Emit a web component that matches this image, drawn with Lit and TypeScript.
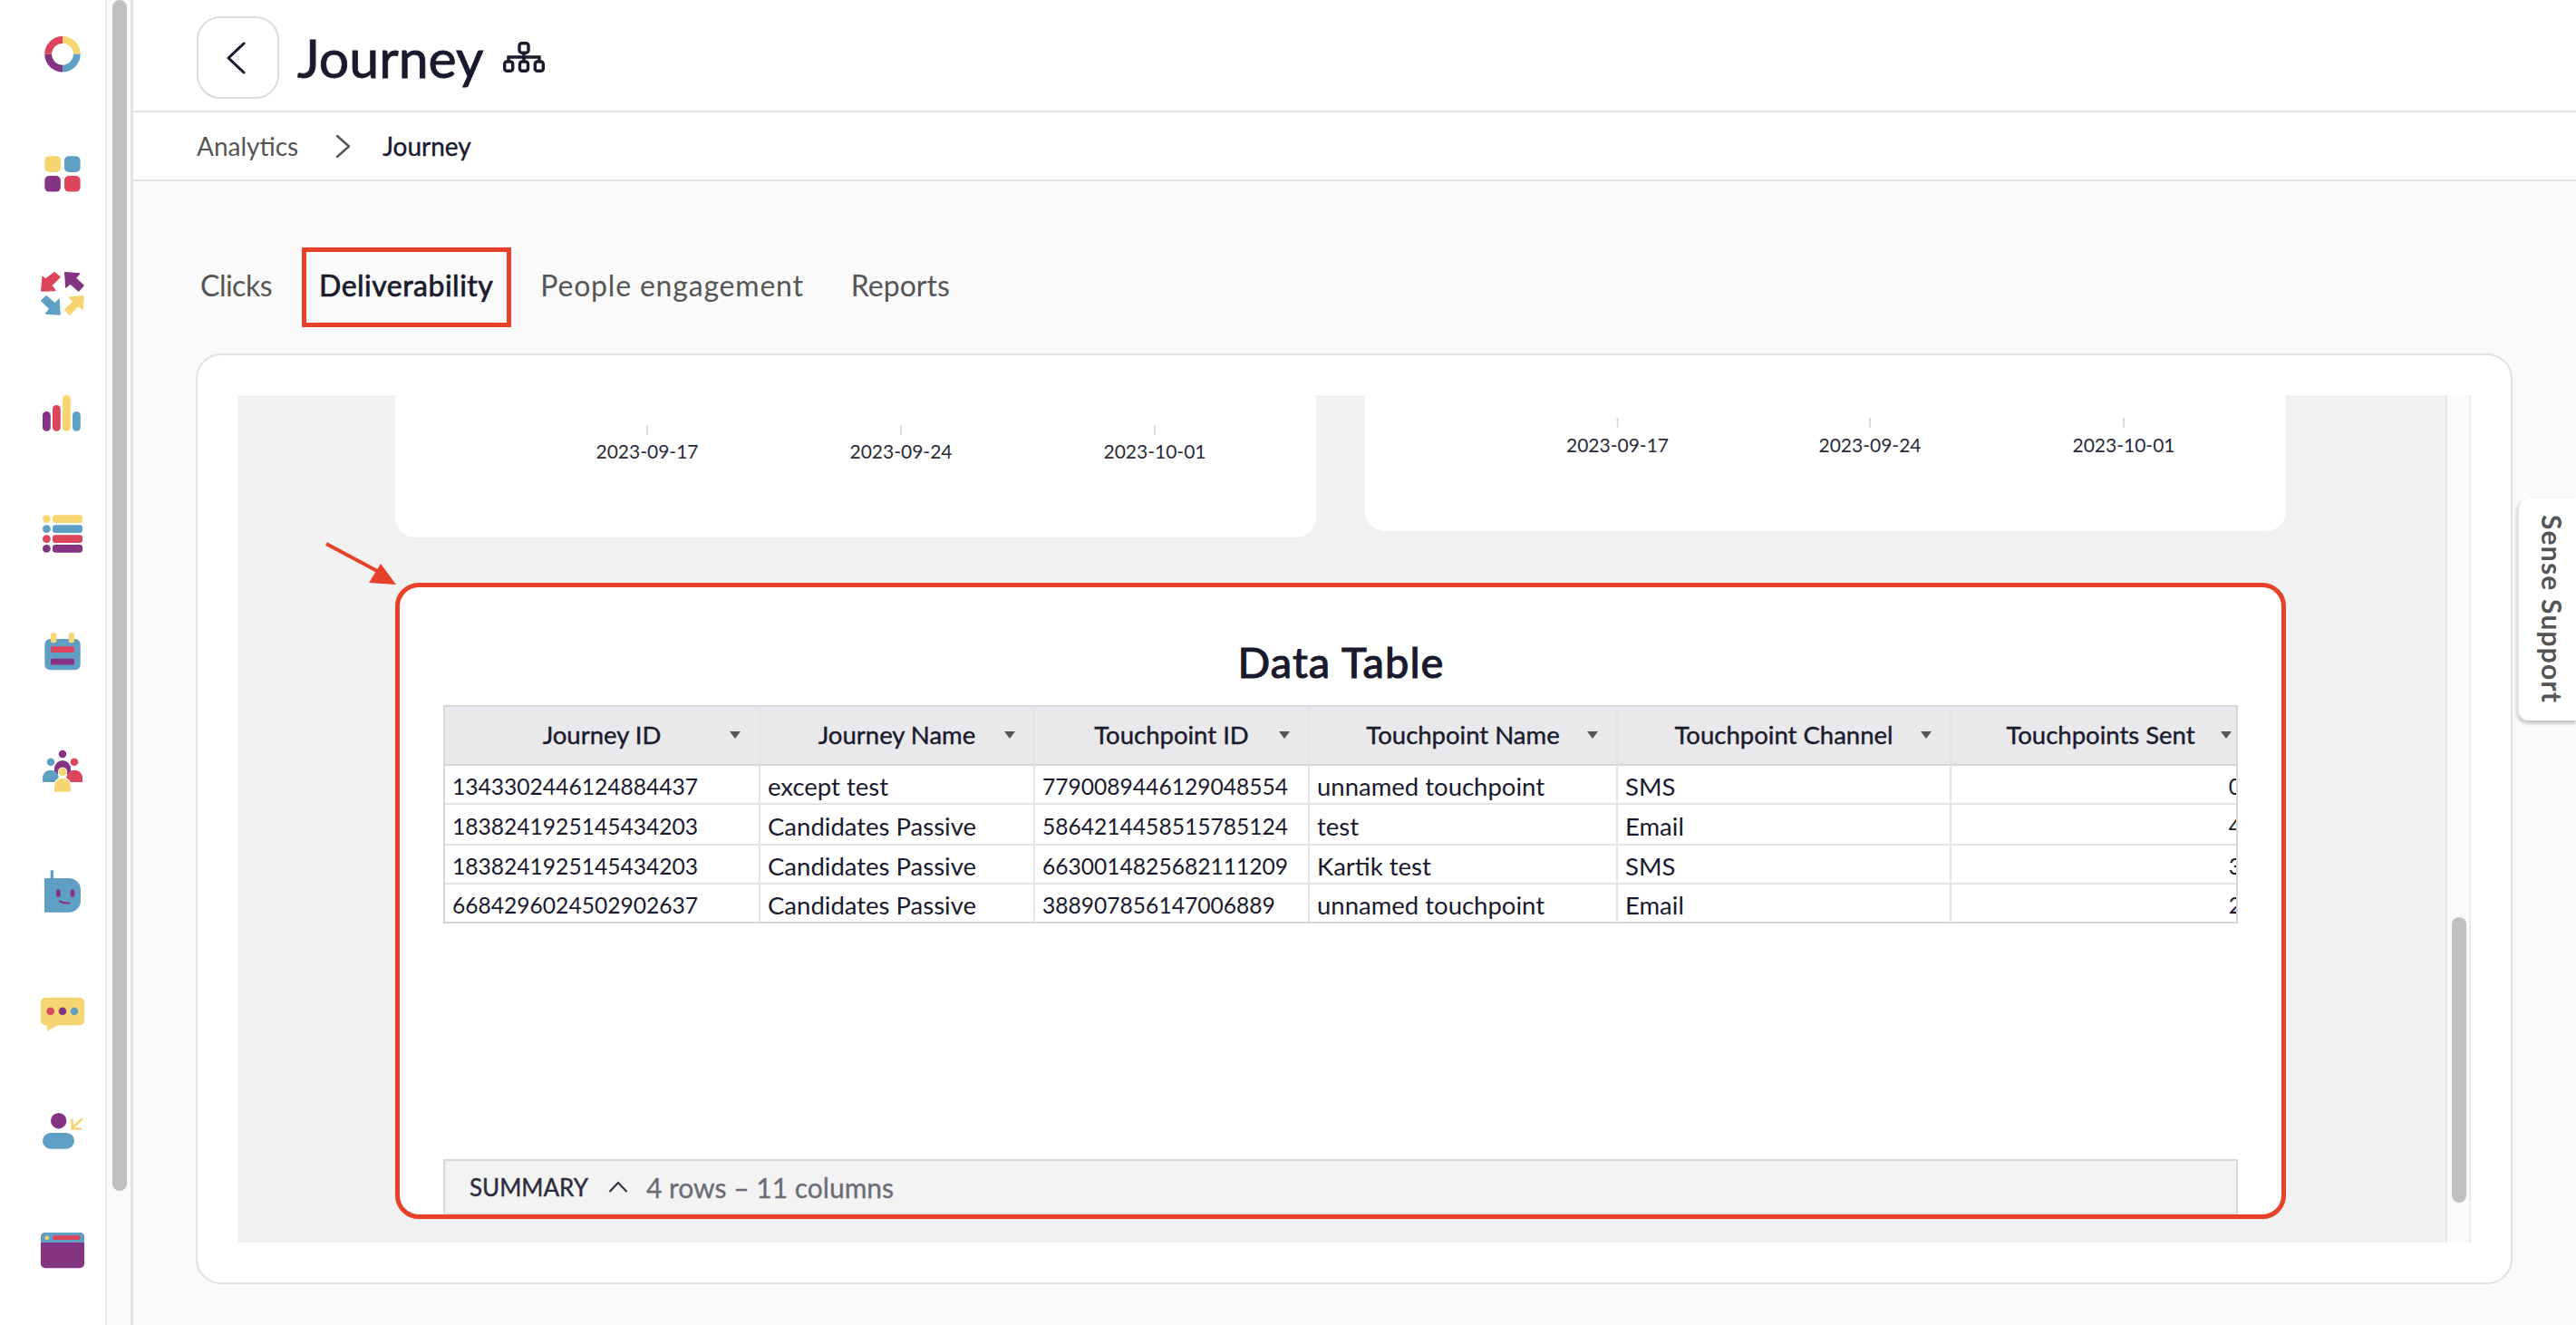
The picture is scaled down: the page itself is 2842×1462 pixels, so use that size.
import { LitElement, html, css, svg } from 'lit';
import { customElement } from 'lit/decorators.js';

const Y = '#f7d570';
const B = '#5f9fc3';
const P = '#843482';
const R = '#dc455c';

const columns = ['Journey ID', 'Journey Name', 'Touchpoint ID', 'Touchpoint Name', 'Touchpoint Channel', 'Touchpoints Sent'];
const rows = [
  ['1343302446124884437', 'except test', '7790089446129048554', 'unnamed touchpoint', 'SMS', '0'],
  ['1838241925145434203', 'Candidates Passive', '5864214458515785124', 'test', 'Email', '4'],
  ['1838241925145434203', 'Candidates Passive', '6630014825682111209', 'Kartik test', 'SMS', '3'],
  ['6684296024502902637', 'Candidates Passive', '388907856147006889', 'unnamed touchpoint', 'Email', '2'],
];

// the viewBox of each icon is a 60px window on page coordinates, one every 132px
const box = (i: number) => `39 ${30 + 132 * i} 60 60`;

const railIcons = [
  svg`<g fill="none" stroke-width="7.8">
    <path d="M69 44 A15.8 15.8 0 0 1 84.8 59.8" stroke=${Y} />
    <path d="M84.8 59.8 A15.8 15.8 0 0 1 69 75.6" stroke=${B} />
    <path d="M69 75.6 A15.8 15.8 0 0 1 53.2 59.8" stroke=${P} />
    <path d="M53.2 59.8 A15.8 15.8 0 0 1 69 44" stroke=${R} />
  </g>`,
  svg`<rect x="49.3" y="172.3" width="17.6" height="17.6" rx="5" fill=${Y} />
    <rect x="71" y="172.3" width="17.6" height="17.6" rx="5" fill=${B} />
    <rect x="49.3" y="194" width="17.6" height="17.6" rx="5" fill=${P} />
    <rect x="71" y="194" width="17.6" height="17.6" rx="5" fill=${R} />`,
  svg`<g stroke-linejoin="round" stroke-width="1.5">
    <polygon points="47.2,305.5 50,308.3 60,300.8 66,305.7 56.7,315 61,320.4 45.8,321" fill=${R} stroke=${R} />
    <polygon points="71.8,300.8 87.6,302 83.3,306.7 92,315 86.7,321 77.3,312.7 72.9,317" fill=${P} stroke=${P} />
    <polygon points="66,347 50.6,346 55,340.7 45.8,331.7 51,326.8 60.7,335 65,330.6" fill=${B} stroke=${B} />
    <polygon points="92,326.8 91,341 86.7,337.3 76.7,347 71.8,341.7 81,332.7 76.6,328" fill=${Y} stroke=${Y} />
  </g>`,
  svg`<rect x="47" y="454" width="8.8" height="21.8" rx="4.4" fill=${P} />
    <rect x="58" y="447" width="8.8" height="28.8" rx="4.4" fill=${R} />
    <rect x="69" y="436" width="8.8" height="39.8" rx="4.4" fill=${Y} />
    <rect x="80" y="454" width="8.8" height="21.8" rx="4.4" fill=${B} />`,
  svg`${([[568.3, Y], [579.3, B], [590.3, R], [601, P]] as [number, string][]).map(
    ([y, c]) => svg`<circle cx="51.4" cy=${y + 4.4} r="4.4" fill=${c} />
      <rect x="58" y=${y} width="33" height="8.8" rx="3" fill=${c} />`
  )}`,
  svg`<rect x="49.3" y="705" width="39.4" height="34.3" rx="6" fill=${B} />
    <rect x="56" y="698.3" width="6.3" height="11" rx="2" fill=${Y} />
    <rect x="75.7" y="698.3" width="6.3" height="11" rx="2" fill=${Y} />
    <rect x="56" y="713.3" width="26" height="6.7" rx="1.5" fill=${R} />
    <rect x="56" y="726.7" width="26" height="6.7" rx="1.5" fill=${P} />`,
  svg`<circle cx="69" cy="832" r="4.3" fill=${P} />
    <path d="M60 848 a9 9 0 0 1 18 0 v6 h-18z" fill=${P} />
    <circle cx="56" cy="840.7" r="4.3" fill=${B} />
    <path d="M47 863 v-6 a9 9 0 0 1 17.7 0 v6z" fill=${B} />
    <circle cx="82" cy="840.7" r="4.3" fill=${R} />
    <path d="M73.3 863 v-6 a9 9 0 0 1 17.7 0 v6z" fill=${R} />
    <circle cx="69" cy="851.6" r="5.2" fill="#fff" />
    <path d="M58.6 875 v-7 a10.4 10.4 0 0 1 20.8 0 v7z" fill="#fff" />
    <circle cx="69" cy="851.6" r="4.3" fill=${Y} />
    <path d="M60 873.8 v-6 a9 9 0 0 1 18 0 v6z" fill=${Y} />`,
  svg`<rect x="55.7" y="960" width="3.3" height="12" rx="1.6" fill=${B} />
    <path d="M50 969 H76 A13 13 0 0 1 89 982 V994 A13 13 0 0 1 76 1006.7 H50 A1 1 0 0 1 49 1005.7 V970 A1 1 0 0 1 50 969z" fill=${B} />
    <ellipse cx="64.3" cy="985.7" rx="2.5" ry="4.4" fill=${P} />
    <ellipse cx="80" cy="985.7" rx="2.5" ry="4.4" fill=${P} />
    <path d="M66 994.5 Q71 997 76.5 996.5" fill="none" stroke=${P} stroke-width="2" stroke-linecap="round" />`,
  svg`<path d="M50 1100.7 H88 A5 5 0 0 1 93 1105.7 V1126.3 A5 5 0 0 1 88 1131.3 H64 L51.7 1137.7 V1131.3 H50 A5 5 0 0 1 45 1126.3 V1105.7 A5 5 0 0 1 50 1100.7z" fill=${Y} />
    <circle cx="55.7" cy="1115.7" r="4.3" fill=${R} />
    <circle cx="69" cy="1115.7" r="4.3" fill=${P} />
    <circle cx="82" cy="1115.7" r="4.3" fill=${B} />`,
  svg`<circle cx="64.7" cy="1236.7" r="8.7" fill=${P} />
    <rect x="47" y="1250" width="35" height="17.7" rx="8.8" fill=${B} />
    <path d="M90 1235 L79.5 1245 M79.5 1235.5 V1245.5 H89" fill="none" stroke=${Y} stroke-width="2.6" stroke-linecap="round" />`,
  svg`<rect x="45" y="1360" width="48" height="39.3" rx="5" fill=${P} />
    <path d="M50 1360 H88 A5 5 0 0 1 93 1365 V1371 H45 V1365 A5 5 0 0 1 50 1360z" fill=${B} />
    <circle cx="51.7" cy="1365.7" r="2.3" fill=${Y} />
    <rect x="58" y="1363.3" width="30.7" height="4.7" rx="2.3" fill=${R} />`,
];

@customElement('app-root')
export class AppRoot extends LitElement {
  static styles = css`
    :host {
      display: flex;
      position: relative;
      width: 2842px;
      height: 1462px;
      overflow: hidden;
      background: #fafafa;
      font-family: Lato, 'Liberation Sans', sans-serif;
      color: #1a1a2e;
    }
    .rail {
      width: 116px;
      background: #fff;
      flex: none;
      display: flex;
      flex-direction: column;
      padding-left: 39px;
      box-sizing: border-box;
      padding-top: 30px;
      gap: 72px;
    }
    .rail svg {
      display: block;
      width: 60px;
      height: 60px;
      flex: none;
    }
    .page-bar {
      width: 31px;
      flex: none;
      box-sizing: border-box;
      background: #fafafa;
      border-left: 2px solid #e8e8e8;
      border-right: 3px solid #e4e4e4;
      padding-left: 6px;
    }
    .page-thumb {
      width: 16px;
      height: 1314px;
      background: #c0c0c0;
      border-radius: 8px;
    }
    .main {
      flex: 1;
      min-width: 0;
    }
    .head {
      height: 124px;
      box-sizing: border-box;
      background: #fff;
      border-bottom: 2px solid #e2e2e2;
      display: flex;
      align-items: flex-start;
      padding: 18px 0 0 70px;
    }
    .back {
      width: 91px;
      height: 91px;
      box-sizing: border-box;
      border: 2px solid #dcdcdc;
      border-radius: 26px;
      display: flex;
      align-items: center;
      justify-content: center;
      padding-right: 6px;
      flex: none;
    }
    .back svg {
      display: block;
    }
    h1 {
      margin: 0 0 0 20px;
      font-size: 59px;
      line-height: 91px;
      font-weight: 400;
      -webkit-text-stroke: 0.9px #1a1a2e;
      color: #1a1a2e;
    }
    .tree {
      margin: 28px 0 0 22px;
      display: block;
    }
    .crumbs {
      height: 76px;
      box-sizing: border-box;
      background: #fff;
      border-bottom: 2px solid #e2e2e2;
      display: flex;
      align-items: center;
      padding-left: 70px;
      font-size: 28px;
      color: #555;
      gap: 38px;
    }
    .crumbs svg {
      margin: 0 -3px 0 3px;
    }
    .crumbs b {
      font-weight: 400;
      -webkit-text-stroke: 0.4px #1a1a2e;
      color: #1a1a2e;
    }
    .body {
      padding: 72px 70px 0 69px;
    }
    .tabs {
      height: 88px;
      box-sizing: border-box;
      padding: 0 0 3px 5px;
      display: flex;
      align-items: center;
      gap: 52px;
      font-size: 32px;
      line-height: 40px;
      color: #555;
    }
    .tab {
      position: relative;
    }
    .tab.clicks {
      letter-spacing: -0.5px;
    }
    .tab.people {
      letter-spacing: 0.8px;
    }
    .tab.on {
      color: #1a1a2e;
      letter-spacing: 0.5px;
      -webkit-text-stroke: 0.7px #1a1a2e;
    }
    .tab.on::after {
      content: '';
      position: absolute;
      left: -19px;
      right: -20px;
      top: -22px;
      bottom: -26px;
      border: 5px solid #e8412a;
    }
    .card {
      margin-top: 30px;
      height: 1027px;
      box-sizing: border-box;
      background: #fff;
      border: 2px solid #e2e2e2;
      border-radius: 28px;
      padding: 44px;
    }
    .frame {
      display: flex;
      height: 935px;
      overflow: hidden;
    }
    .canvas {
      flex: 1;
      position: relative;
      background: #f1f1f1;
      padding: 0 176px 0 174px;
    }
    .charts {
      display: flex;
      justify-content: space-between;
      align-items: flex-start;
      height: 157px;
    }
    .chart {
      width: 1016px;
      background: #fff;
      border-radius: 0 0 22px 22px;
    }
    .chart svg {
      display: block;
    }
    .chart text {
      font-size: 21px;
      fill: #2a2a3a;
      text-anchor: middle;
    }
    .pointer {
      position: absolute;
      left: 88px;
      top: 160px;
    }
    .report {
      margin-top: 50px;
      height: 702px;
      box-sizing: border-box;
      background: #fff;
      border: 5px solid #e8412a;
      border-radius: 26px;
      padding: 0 47px 0 48px;
      display: flex;
      flex-direction: column;
    }
    h2 {
      margin: 0;
      height: 130px;
      padding-top: 50px;
      line-height: 64px;
      box-sizing: border-box;
      text-align: center;
      font-size: 47px;
      font-weight: 400;
      letter-spacing: 1.1px;
      -webkit-text-stroke: 1.2px #1a1a2e;
      color: #1a1a2e;
    }
    .table {
      width: 1980px;
      box-sizing: border-box;
      border: 2px solid #d6d6dc;
      overflow: hidden;
      display: grid;
      grid-template-columns: 348px 303px 303px 340px 368px 331px;
      grid-template-rows: 65px 43px 45px 43px 41px;
      font-size: 27.5px;
    }
    .th,
    .td {
      box-sizing: border-box;
      border-right: 2px solid #e4e4e6;
      border-bottom: 2px solid #e4e4e6;
      display: flex;
      align-items: center;
      white-space: nowrap;
    }
    .th {
      position: relative;
      justify-content: center;
      padding-bottom: 3px;
      background: #e9e9ec;
      border-bottom-color: #d6d6dc;
      -webkit-text-stroke: 0.4px #1a1a2e;
    }
    .th::after {
      content: '';
      position: absolute;
      right: 20px;
      top: 27px;
      border-left: 6px solid transparent;
      border-right: 6px solid transparent;
      border-top: 8px solid #555;
    }
    .td {
      padding: 3px 9px 0 8px;
    }
    .td.id {
      font-size: 24.6px;
    }
    .td.num {
      justify-content: flex-end;
      font-size: 24.6px;
    }
    .td.last {
      border-bottom: none;
    }
    .summary {
      margin-top: auto;
      width: 1980px;
      height: 61px;
      box-sizing: border-box;
      background: #f3f3f4;
      border: 2px solid #d6d6dc;
      border-bottom-color: #e4e4e6;
      display: flex;
      align-items: center;
      padding-left: 27px;
    }
    .summary b {
      font-size: 26px;
      font-weight: 400;
      -webkit-text-stroke: 0.4px #2c2c3c;
      color: #2c2c3c;
    }
    .summary svg {
      margin: 0 20px 0 22px;
      display: block;
    }
    .summary span {
      font-size: 30px;
      -webkit-text-stroke: 0.3px #6b6b78;
      color: #6b6b78;
    }
    .inner-bar {
      width: 28px;
      flex: none;
      box-sizing: border-box;
      background: #fafafa;
      border-left: 2px solid #e8e8e8;
      border-right: 2px solid #ececec;
      padding: 576px 0 0 5px;
    }
    .inner-thumb {
      width: 16px;
      height: 315px;
      background: #c0c0c0;
      border-radius: 8px;
    }
    .support {
      position: absolute;
      right: 0;
      top: 550px;
      width: 65px;
      height: 245px;
      box-sizing: border-box;
      background: #fff;
      border-radius: 12px 0 0 12px;
      border-left: 2px solid #e6e6e6;
      box-shadow: 0 3px 4px rgba(0, 0, 0, 0.25);
      writing-mode: vertical-rl;
      display: flex;
      align-items: center;
      justify-content: center;
      padding-left: 10px;
      font-size: 30px;
      font-weight: 700;
      letter-spacing: 1.2px;
      color: #555;
    }
  `;

  private axis(ticks: number[], top: number, base: number, height: number) {
    const labels = ['2023-09-17', '2023-09-24', '2023-10-01'];
    return html`<svg width="1016" height=${height} viewBox="0 0 1016 ${height}">
      ${ticks.map(
        (x, i) => svg`<line x1=${x} x2=${x} y1=${top} y2=${top + 11} stroke="#d4d4d8" stroke-width="1.6" />
          <text x=${x} y=${base}>${labels[i]}</text>`
      )}
    </svg>`;
  }

  render() {
    return html`
      <nav class="rail">
        ${railIcons.map((g, i) => html`<svg viewBox=${box(i)}>${g}</svg>`)}
      </nav>
      <div class="page-bar"><div class="page-thumb"></div></div>
      <div class="main">
        <header class="head">
          <div class="back">
            <svg width="24" height="38" viewBox="0 0 24 38">
              <path d="M21 3 L4 19 L21 35" fill="none" stroke="#1a1a2e" stroke-width="3" stroke-linecap="round" stroke-linejoin="round" />
            </svg>
          </div>
          <h1>Journey</h1>
          <svg class="tree" width="46" height="34" viewBox="0 0 46 34" fill="none" stroke="#1a1a2e" stroke-width="3.4">
            <rect x="18" y="1.7" width="10" height="10.5" rx="2.8" />
            <path d="M23 12 V22 M6 22 V17 H40 V22" />
            <rect x="1.7" y="22" width="9" height="10.3" rx="2.6" />
            <rect x="18.5" y="22" width="9" height="10.3" rx="2.6" />
            <rect x="35.3" y="22" width="9" height="10.3" rx="2.6" />
          </svg>
        </header>
        <div class="crumbs">
          <span>Analytics</span>
          <svg width="17" height="27" viewBox="0 0 17 27">
            <path d="M2 2 L15 13.5 L2 25" fill="none" stroke="#555" stroke-width="2.4" stroke-linecap="round" stroke-linejoin="round" />
          </svg>
          <b>Journey</b>
        </div>
        <div class="body">
          <div class="tabs">
            <span class="tab clicks">Clicks</span>
            <span class="tab on">Deliverability</span>
            <span class="tab people">People engagement</span>
            <span class="tab">Reports</span>
          </div>
          <section class="card">
            <div class="frame">
              <div class="canvas">
                <div class="charts">
                  <div class="chart">${this.axis([278, 558, 838], 33, 70, 157)}</div>
                  <div class="chart">${this.axis([278.5, 557, 837], 25, 63, 150)}</div>
                </div>
                <svg class="pointer" width="90" height="60" viewBox="0 0 90 60">
                  <path d="M10 4 L68 35" stroke="#e8412a" stroke-width="4" />
                  <polygon points="87,49 70,26 57,47" fill="#e8412a" />
                </svg>
                <div class="report">
                  <h2>Data Table</h2>
                  <div class="table">
                    ${columns.map((c) => html`<div class="th">${c}</div>`)}
                    ${rows.map((r, i) =>
                      r.map(
                        (v, j) => html`<div class="td ${j === 5 ? 'num' : j === 0 || j === 2 ? 'id' : ''} ${i === 3 ? 'last' : ''}">${v}</div>`
                      )
                    )}
                  </div>
                  <div class="summary">
                    <b>SUMMARY</b>
                    <svg width="22" height="13" viewBox="0 0 22 13">
                      <path d="M1.5 12 L11 2 L20.5 12" fill="none" stroke="#2c2c3c" stroke-width="2" />
                    </svg>
                    <span>4 rows – 11 columns</span>
                  </div>
                </div>
              </div>
              <div class="inner-bar"><div class="inner-thumb"></div></div>
            </div>
          </section>
        </div>
      </div>
      <aside class="support">Sense Support</aside>
    `;
  }
}
